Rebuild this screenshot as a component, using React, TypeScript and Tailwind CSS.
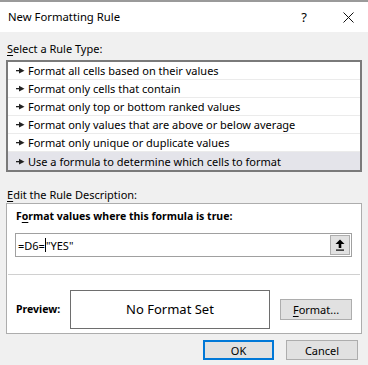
import React from 'react';

const rules = [
  'Format all cells based on their values',
  'Format only cells that contain',
  'Format only top or bottom ranked values',
  'Format only values that are above or below average',
  'Format only unique or duplicate values',
  'Use a formula to determine which cells to format',
];

const RowArrow = () => (
  <svg width="9" height="7" viewBox="0 0 9 7" className="shrink-0">
    <rect x="0" y="3" width="4" height="1.3" fill="#222" />
    <polygon points="3,0.8 8.5,3.65 3,6.4" fill="#222" />
  </svg>
);

const App: React.FC = () => {
  return (
    <div
      className="w-[368px] h-[365px] bg-[#f0f0f0] flex flex-col text-black overflow-hidden"
      style={{ fontFamily: '"Noto Sans", "Open Sans", sans-serif' }}
    >
      {/* Title bar */}
      <div className="h-[2px] bg-[#9a9a9a]"></div>
      <div className="h-[30px] bg-white flex items-center justify-between pl-[8px] pr-[14px]">
        <span className="text-[11.3px] leading-none">New Formatting Rule</span>
        <div className="flex items-center gap-[36px]">
          <span className="text-[13px] leading-none">?</span>
          <svg width="11" height="11" viewBox="0 0 11 11">
            <path d="M0.5 0.5 L10.5 10.5 M10.5 0.5 L0.5 10.5" stroke="#111" strokeWidth="1" />
          </svg>
        </div>
      </div>

      <div className="flex flex-col px-[6px]">
        <div className="mt-[9px] h-[16px] leading-[16px] text-[11px] pl-[1px]">
          <span className="underline underline-offset-2">S</span>elect a Rule Type:
        </div>

        {/* Rule type list */}
        <div className="mt-[3px] border-2 border-[#7a7a7a] bg-white">
          {rules.map((r, i) => (
            <div
              key={r}
              className={`h-[18px] flex items-center gap-[3px] pl-[8px] text-[11px] ${
                i === rules.length - 1 ? 'bg-[#e4e4ea]' : 'border-b border-[#ebebeb]'
              }`}
            >
              <RowArrow />
              <span className="leading-none">{r}</span>
            </div>
          ))}
        </div>

        <div className="mt-[16px] h-[14px] leading-[14px] text-[11px] pl-[1px]">
          <span className="underline underline-offset-2">E</span>dit the Rule Description:
        </div>

        {/* Rule description */}
        <div className="mt-[1px] h-[131px] border border-[#adadad] bg-white flex flex-col">
          <div className="mt-[4px] pl-[9px] text-[10.5px] font-bold leading-[16px]">
            F<span className="underline underline-offset-2">o</span>rmat values where this formula is true:
          </div>
          <div className="mt-[9px] ml-[8px] mr-[9px] h-[24px] border border-[#a0a0a0] flex items-center">
            <div className="flex-1 flex items-center pl-[2px] text-[11px] leading-none">
              <span>=D6=</span>
              <span className="w-px h-[14px] bg-black"></span>
              <span>"YES"</span>
            </div>
            <div className="w-[20px] h-[20px] mr-[1px] bg-[#e1e1e1] border border-[#adadad] flex items-center justify-center">
              <svg width="10" height="12" viewBox="0 0 10 12">
                <polygon points="5,0.5 9.5,5 0.5,5" fill="#000" />
                <rect x="3.7" y="4.5" width="2.6" height="4.5" fill="#000" />
                <rect x="1" y="10.5" width="8" height="1.2" fill="#000" />
              </svg>
            </div>
          </div>
          <div className="mt-[17px] mx-[1px] h-px bg-[#d0d0d0]"></div>
          <div className="mt-[15px] flex items-center pl-[9px]">
            <span className="w-[54px] text-[10.5px] font-bold leading-none">Preview:</span>
            <div className="w-[200px] h-[39px] border border-[#6e6e6e] flex items-center justify-center text-[13px] leading-none">
              No Format Set
            </div>
            <button className="ml-[10px] w-[72px] h-[21px] bg-[#e1e1e1] border border-[#adadad] text-[11px] leading-none">
              <span className="underline underline-offset-2">F</span>ormat...
            </button>
          </div>
        </div>

        {/* Dialog buttons */}
        <div className="mt-[6px] flex justify-end gap-[12px] pr-[4px]">
          <button className="w-[71px] h-[20px] bg-[#e1e1e1] border-2 border-[#0078d7] text-[11px] leading-none">
            OK
          </button>
          <button className="w-[72px] h-[20px] bg-[#e1e1e1] border border-[#adadad] text-[11px] leading-none">
            Cancel
          </button>
        </div>
      </div>
    </div>
  );
};

export default App;
